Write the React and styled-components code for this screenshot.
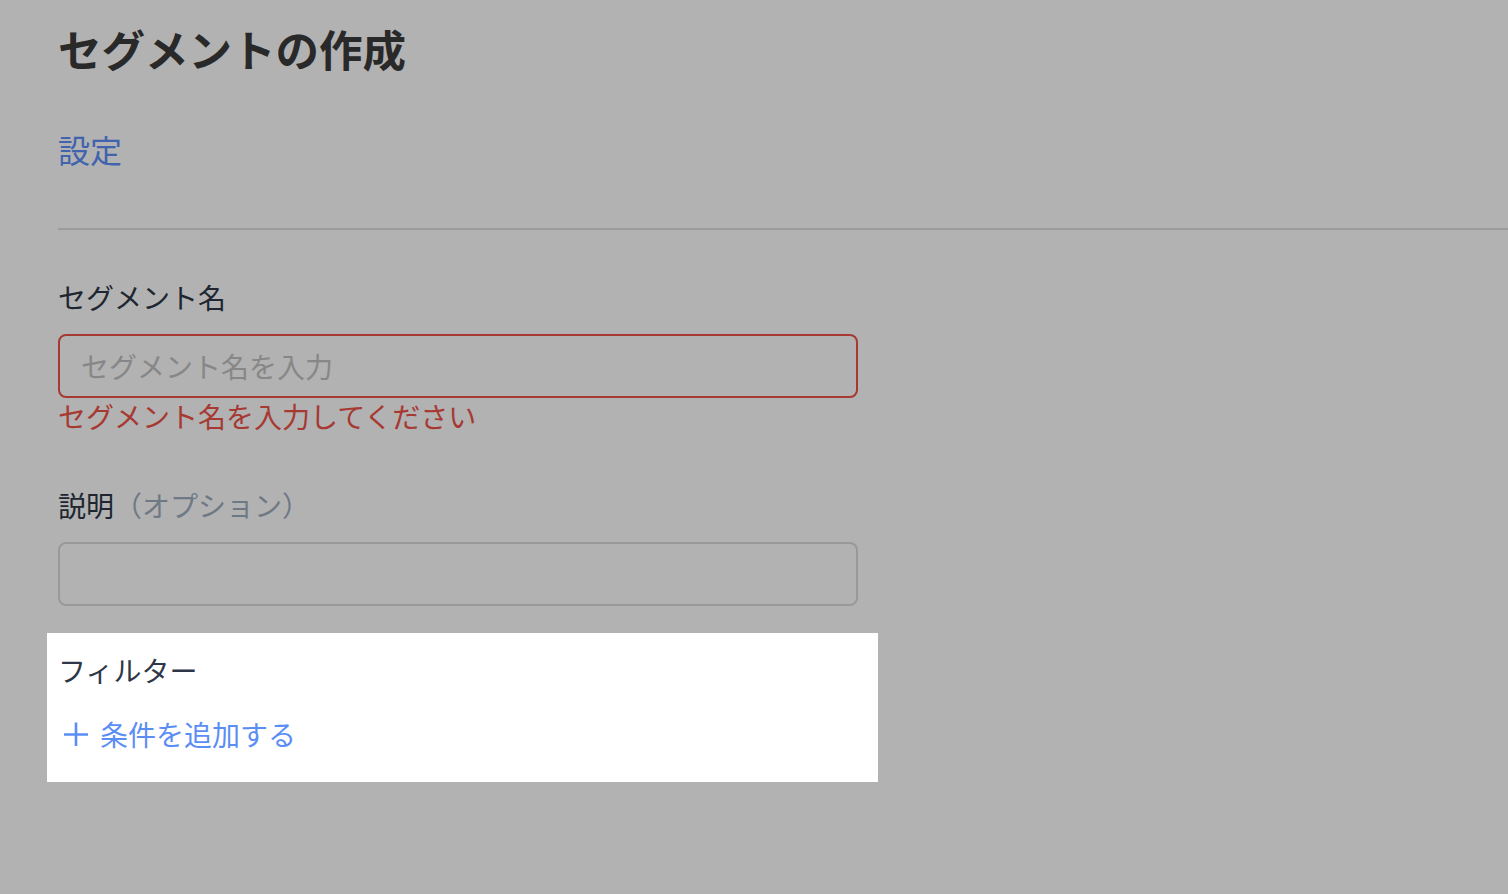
import React from "react";
import styled, { createGlobalStyle } from "styled-components";

const GlobalStyle = createGlobalStyle`
  html, body {
    margin: 0;
    padding: 0;
    background: #ffffff;
    overflow: hidden;
  }
  body {
    font-family: "Noto Sans CJK JP", "Noto Sans", sans-serif;
  }
  * { box-sizing: border-box; }
`;

const Page = styled.div`
  min-height: 100vh;
  background: #ffffff;
  padding: 16px 0 0 58px;
`;

const Title = styled.h1`
  margin: 0;
  font-size: 43.5px;
  line-height: 66px;
  font-weight: 700;
  color: #3b3b3b;
`;

const TabBar = styled.nav`
  display: flex;
  margin-top: 44px;
  padding-bottom: 56px;
  border-bottom: 2px solid #e0e0e0;
`;

const Tab = styled.a`
  font-size: 32px;
  line-height: 46px;
  color: #5d8ffa;
  text-decoration: none;
  cursor: pointer;
`;

const Form = styled.div`
  width: 800px;
  display: flex;
  flex-direction: column;
`;

const Field = styled.div`
  display: flex;
  flex-direction: column;
  margin-top: ${(p) => p.$gap}px;
`;

const Label = styled.label`
  font-size: 28px;
  line-height: 40px;
  color: #2d3748;
  margin-bottom: 17px;
`;

const Optional = styled.span`
  color: #a0aec0;
`;

const TextInput = styled.input`
  height: 64px;
  width: 100%;
  border: 2px solid ${(p) => (p.$error ? "#ef5249" : "#dcdcdc")};
  border-radius: 8px;
  padding: 0 21px;
  font-family: inherit;
  font-size: 28px;
  color: #2d3748;
  background: #ffffff;
  outline: none;
  &::placeholder {
    color: #c2c2c2;
  }
`;

const ErrorText = styled.div`
  font-size: 28px;
  line-height: 36px;
  color: #ef5249;
`;

const FilterSection = styled.section`
  position: relative;
  margin-top: 44px;
  display: flex;
  flex-direction: column;
  gap: 24px;

  &::before {
    content: "";
    position: absolute;
    top: -17px;
    bottom: -28px;
    left: -11px;
    right: -20px;
    box-shadow: 0 0 0 9999px rgba(0, 0, 0, 0.3);
    pointer-events: none;
    z-index: 10;
  }
`;

const SectionLabel = styled.div`
  font-size: 28px;
  line-height: 40px;
  color: #2d3748;
`;

const AddButton = styled.button`
  display: flex;
  align-items: center;
  gap: 12px;
  align-self: flex-start;
  padding: 0 0 0 6px;
  border: none;
  background: none;
  font-family: inherit;
  font-size: 28px;
  line-height: 40px;
  color: #5b8ef5;
  cursor: pointer;
`;

const PlusIcon = () => (
  <svg width="24" height="24" viewBox="0 0 24 24" fill="none">
    <path d="M0 12.5h24M12 0.5v24" stroke="#5b8ef5" strokeWidth="2.6" />
  </svg>
);

export default function App() {
  return (
    <>
      <GlobalStyle />
      <Page>
        <Title>セグメントの作成</Title>
        <TabBar>
          <Tab>設定</Tab>
        </TabBar>
        <Form>
          <Field $gap={47}>
            <Label>セグメント名</Label>
            <TextInput $error placeholder="セグメント名を入力" />
            <ErrorText>セグメント名を入力してください</ErrorText>
          </Field>
          <Field $gap={51}>
            <Label>
              説明<Optional>（オプション）</Optional>
            </Label>
            <TextInput />
          </Field>
          <FilterSection>
            <SectionLabel>フィルター</SectionLabel>
            <AddButton>
              <PlusIcon />
              条件を追加する
            </AddButton>
          </FilterSection>
        </Form>
      </Page>
    </>
  );
}
